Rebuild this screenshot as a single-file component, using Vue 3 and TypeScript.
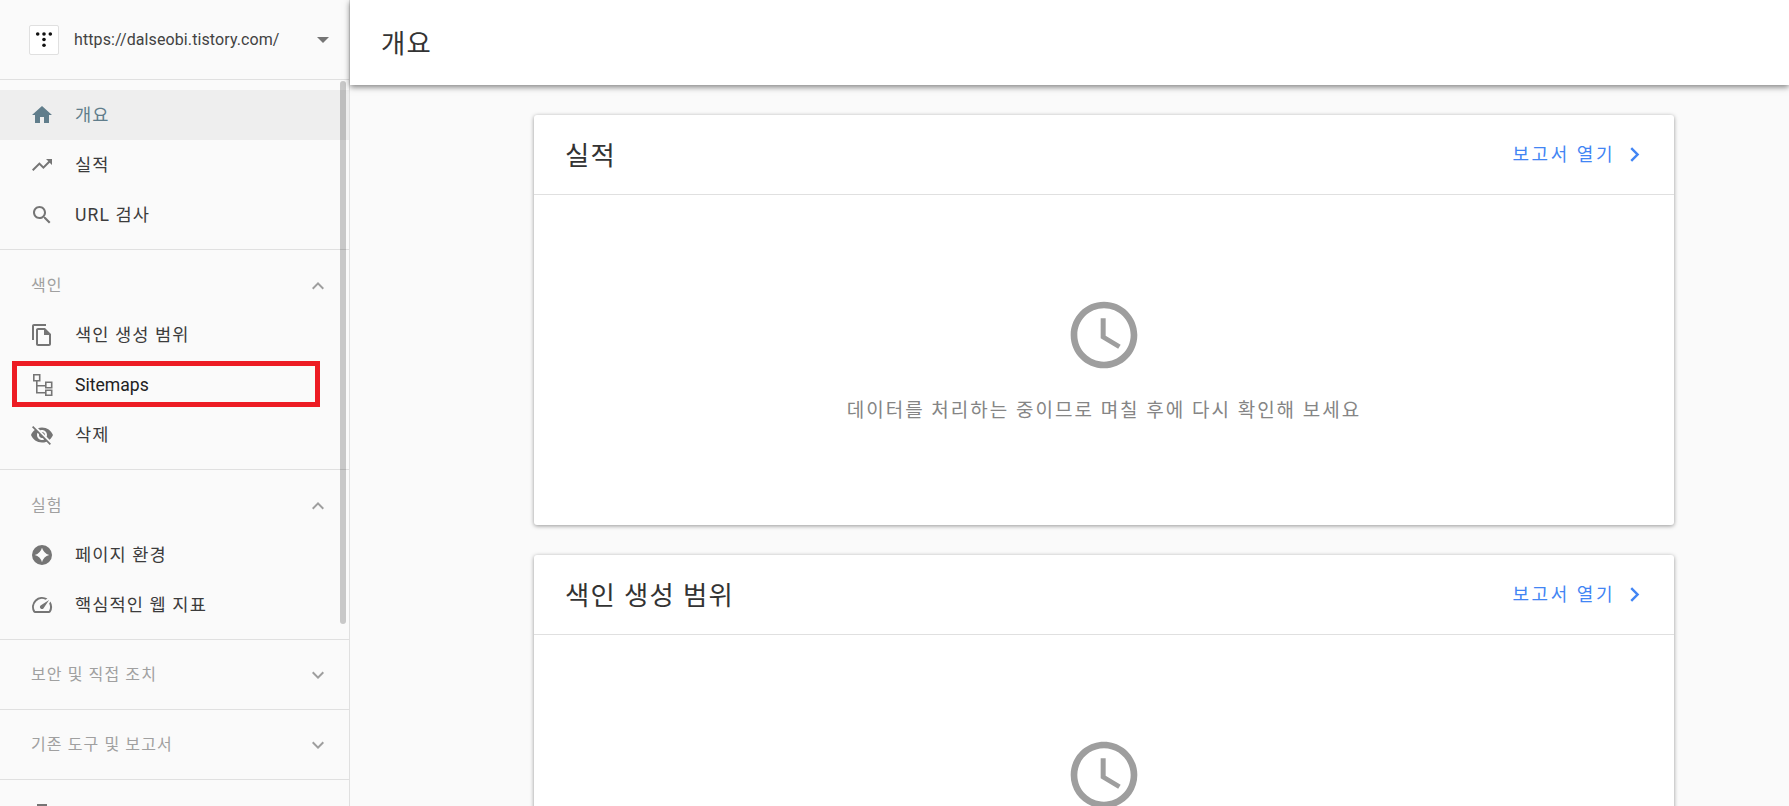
<script setup lang="ts">
interface NavItem {
  label: string
  icon: string
  tone?: 'active'
  latin?: boolean
}

interface NavSection {
  title?: string
  open?: boolean
  items: NavItem[]
}

const icons = {
  home: 'M10 20v-6h4v6h5v-8h3L12 3 2 12h3v8z',
  trend: 'M16 6l2.29 2.29-4.88 4.88-4-4L2 16.59 3.41 18l6-6 4 4 6.3-6.29L22 12V6z',
  search: 'M15.5 14h-.79l-.28-.27C15.41 12.59 16 11.11 16 9.5 16 5.91 13.09 3 9.5 3S3 5.91 3 9.5 5.91 16 9.5 16c1.61 0 3.09-.59 4.23-1.57l.27.28v.79l5 4.99L20.49 19l-4.99-5zm-6 0C7.01 14 5 11.99 5 9.5S7.01 5 9.5 5 14 7.01 14 9.5 11.99 14 9.5 14z',
  copy: 'M16 1H4c-1.1 0-2 .9-2 2v14h2V3h12V1zm-1 4H8c-1.1 0-1.99.9-1.99 2L6 21c0 1.1.89 2 1.99 2H19c1.1 0 2-.9 2-2V11l-6-6zM8 21V7h6v5h5v9H8z',
  sitemap: 'M3 1h7.500v7.500H3zM4.600 2.600v4.300h4.300v-4.300zM15 8.500h7.500v7H15zM16.600 10.100v3.800h4.300v-3.800zM15 16.500h7.500V23H15zM16.600 18.100v3.300h4.300v-3.300zM6 8.500h1.600V12H15v1.600H7.600V19H15v1.600H6z',
  eyeOff: 'M12 7c2.76 0 5 2.24 5 5 0 .65-.13 1.26-.36 1.83l2.92 2.92c1.51-1.26 2.7-2.89 3.43-4.75-1.73-4.39-6-7.5-11-7.5-1.4 0-2.74.25-3.98.7l2.16 2.16C10.74 7.13 11.35 7 12 7zM2 4.270l2.28 2.28.46.46C3.08 8.3 1.78 10.02 1 12c1.73 4.39 6 7.5 11 7.5 1.55 0 3.03-.3 4.38-.84l.42.42L19.730 22 21 20.730 3.270 3 2 4.270zM7.530 9.800l1.55 1.55c-.05.21-.08.43-.08.65 0 1.66 1.34 3 3 3 .22 0 .44-.03.65-.08l1.55 1.55c-.67.33-1.41.53-2.2.53-2.76 0-5-2.24-5-5 0-.79.2-1.53.53-2.2zm4.31-.78l3.15 3.15.02-.16c0-1.66-1.34-3-3-3l-.17.01z',
  star: 'M12 2a10 10 0 1 0 0 20 10 10 0 0 0 0-20zM12 4.800Q13.600 10.400 19.200 12 13.600 13.600 12 19.200 10.400 13.600 4.800 12 10.400 10.400 12 4.800z',
  speed: 'M20.380 8.570l-1.230 1.850a8 8 0 0 1-.22 7.580H5.070A8 8 0 0 1 15.580 6.850l1.850-1.230A10 10 0 0 0 3.350 19a2 2 0 0 0 1.720 1h13.850a2 2 0 0 0 1.740-1 10 10 0 0 0-.27-10.440zm-9.790 6.840a2 2 0 0 0 2.830 0l5.660-8.490-8.490 5.660a2 2 0 0 0 0 2.830z',
  links: 'M7 2h10v2H7zM4 6h16v16H4zM6 8v12h12V8z',
}

const sections: NavSection[] = [
  {
    items: [
      { label: '개요', icon: icons.home, tone: 'active' },
      { label: '실적', icon: icons.trend },
      { label: 'URL 검사', icon: icons.search },
    ],
  },
  {
    title: '색인',
    open: true,
    items: [
      { label: '색인 생성 범위', icon: icons.copy },
      { label: 'Sitemaps', icon: icons.sitemap, latin: true },
      { label: '삭제', icon: icons.eyeOff },
    ],
  },
  {
    title: '실험',
    open: true,
    items: [
      { label: '페이지 환경', icon: icons.star },
      { label: '핵심적인 웹 지표', icon: icons.speed },
    ],
  },
  { title: '보안 및 직접 조치', items: [] },
  { title: '기존 도구 및 보고서', items: [] },
]

const cards = [
  { title: '실적', message: '데이터를 처리하는 중이므로 며칠 후에 다시 확인해 보세요' },
  { title: '색인 생성 범위' },
]
</script>

<template>
  <div class="console">
    <aside class="sidebar">
      <div class="property">
        <span class="site-logo">
          <svg width="20" height="20" viewBox="0 0 20 20" fill="#111">
            <circle cx="3.700" cy="4" r="1.800" />
            <circle cx="10" cy="4" r="1.800" />
            <circle cx="16.300" cy="4" r="1.800" />
            <circle cx="10" cy="9.500" r="1.800" />
            <circle cx="10" cy="15.200" r="1.800" />
          </svg>
        </span>
        <span class="site-url">https://dalseobi.tistory.com/</span>
        <span class="caret"></span>
      </div>

      <nav>
        <section v-for="(section, i) in sections" :key="i" class="nav-section" :class="{ 'has-title': section.title, 'is-open': section.open }">
          <div v-if="section.title" class="section-title">
            <span>{{ section.title }}</span>
            <svg width="24" height="24" viewBox="0 0 24 24" fill="#9e9e9e">
              <path v-if="section.open" d="M12 8l-6 6 1.410 1.410L12 10.830l4.590 4.580L18 14z" />
              <path v-else d="M16.590 8.590L12 13.170 7.410 8.590 6 10l6 6 6-6z" />
            </svg>
          </div>
          <a v-for="item in section.items" :key="item.label" class="nav-item" :class="[item.tone, { latin: item.latin }]">
            <svg width="24" height="24" viewBox="0 0 24 24" fill-rule="evenodd">
              <path :d="item.icon" />
            </svg>
            <span>{{ item.label }}</span>
          </a>
        </section>
        <div class="nav-tail">
          <svg width="24" height="24" viewBox="0 0 24 24" fill="#757575" fill-rule="evenodd">
            <path :d="icons.links" />
          </svg>
        </div>
      </nav>

      <div class="scroll-thumb"></div>
      <div class="highlight"></div>
    </aside>

    <div class="content">
      <header class="page-header">
        <h1>개요</h1>
      </header>
      <main class="cards">
        <article v-for="card in cards" :key="card.title" class="card">
          <div class="card-head">
            <h2>{{ card.title }}</h2>
            <a class="report-link">
              <span>보고서 열기</span>
              <svg width="29" height="29" viewBox="0 0 24 24" fill="#4285f4">
                <path d="M10 6L8.590 7.410 13.170 12l-4.580 4.590L10 18l6-6z" />
              </svg>
            </a>
          </div>
          <div class="card-body">
            <svg class="clock" width="80" height="80" viewBox="0 0 24 24" fill="#9e9e9e">
              <path d="M11.990 2C6.470 2 2 6.480 2 12s4.470 10 9.990 10C17.520 22 22 17.520 22 12S17.520 2 11.990 2zM12 20c-4.420 0-8-3.580-8-8s3.580-8 8-8 8 3.580 8 8-3.580 8-8 8zm.5-13H11v6l5.250 3.150.75-1.230-4.500-2.670z" />
            </svg>
            <p v-if="card.message">{{ card.message }}</p>
          </div>
        </article>
      </main>
    </div>
  </div>
</template>

<style>
html,
body {
  margin: 0;
  height: 100%;
  overflow: hidden;
}
</style>

<style scoped>
.console {
  display: flex;
  height: 806px;
  overflow: hidden;
  background: #fafafa;
  color: #212121;
  font-family: Roboto, "Noto Sans CJK KR", sans-serif;
}

.sidebar {
  position: relative;
  flex: 0 0 349px;
  border-right: 1px solid #e0e0e0;
  overflow: hidden;
}

.property {
  display: flex;
  align-items: center;
  height: 80px;
  padding: 0 20px 0 29px;
  box-sizing: border-box;
  border-bottom: 1px solid #e0e0e0;
}

.site-logo {
  display: flex;
  align-items: center;
  justify-content: center;
  width: 28px;
  height: 28px;
  margin-top: 1px;
  background: #fff;
  border: 1px solid #e0e0e0;
  border-radius: 2px;
}

.site-url {
  flex: 1;
  margin-left: 15px;
  font-size: 16px;
  letter-spacing: 0.1px;
  color: #424242;
}

.caret {
  border-left: 6px solid transparent;
  border-right: 6px solid transparent;
  border-top: 6px solid #757575;
}

.nav-section {
  padding: 10px 0 9px;
  border-bottom: 1px solid #e0e0e0;
}

.nav-section.has-title {
  padding: 0;
}

.nav-section.is-open {
  padding-bottom: 9px;
}

.section-title {
  display: flex;
  align-items: center;
  justify-content: space-between;
  height: 69px;
  padding: 0 19px 0 31px;
  font-size: 16px;
  letter-spacing: 1.1px;
  color: #a0a0a0;
}

.section-title span {
  padding-bottom: 3px;
}

.is-open .section-title {
  height: 60px;
  padding-top: 11px;
  box-sizing: border-box;
}

.nav-item {
  display: flex;
  align-items: center;
  gap: 21px;
  height: 50px;
  padding-left: 30px;
  font-size: 17.6px;
  letter-spacing: 1.1px;
  color: #3c3c3c;
  fill: #757575;
}

.nav-item span {
  padding-bottom: 3px;
}

.nav-item.latin {
  letter-spacing: 0;
  color: #212121;
}

.nav-item.latin span {
  padding-bottom: 0;
}

.nav-item.active {
  background: #eeeeee;
  color: #607d8b;
  fill: #607d8b;
}

.nav-tail {
  padding: 22px 0 0 30px;
}

.scroll-thumb {
  position: absolute;
  top: 81px;
  left: 340px;
  width: 6px;
  height: 543px;
  border-radius: 3px;
  background: rgba(0, 0, 0, 0.2);
}

.highlight {
  position: absolute;
  top: 361px;
  left: 12px;
  width: 298px;
  height: 36px;
  border: 5px solid #ed1c24;
}

.content {
  flex: 1;
  min-width: 0;
}

.page-header {
  position: relative;
  display: flex;
  align-items: center;
  height: 85px;
  padding-left: 31px;
  background: #fff;
  box-shadow: 0 2px 6px rgba(0, 0, 0, 0.5);
}

h1,
h2 {
  margin: 0;
  padding-bottom: 3px;
  font-size: 26.4px;
  font-weight: 400;
  letter-spacing: 1.3px;
  color: #333;
}

.cards {
  display: flex;
  flex-direction: column;
  gap: 30px;
  padding: 30px 0 0 184px;
}

.card {
  width: 1140px;
  height: 410px;
  flex: none;
  border-radius: 3px;
  background: #fff;
  box-shadow: 0 1px 4px rgba(0, 0, 0, 0.4);
}

.card-head {
  display: flex;
  align-items: center;
  justify-content: space-between;
  height: 79px;
  padding: 0 25px 0 31px;
  border-bottom: 1px solid #e0e0e0;
}

.report-link {
  display: flex;
  align-items: center;
  gap: 5px;
  font-size: 18px;
  letter-spacing: 2.55px;
  color: #4285f4;
}

.report-link span {
  padding-bottom: 3px;
}

.card-body {
  display: flex;
  flex-direction: column;
  align-items: center;
  padding-top: 100px;
}

.clock {
  display: block;
}

.card-body p {
  margin: 20px 0 0;
  font-size: 19px;
  letter-spacing: 2px;
  color: #858585;
}
</style>
